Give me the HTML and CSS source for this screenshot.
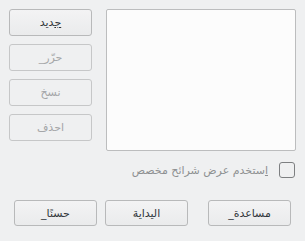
FILE: index.html
```html
<!DOCTYPE html>
<html lang="ar">
<head>
<meta charset="UTF-8" />
<title>عرض الشرائح</title>
<link rel="stylesheet" href="styles.css">
</head>
<body>
  <div class="dialog">
    <div class="top">
      <div class="actions">
        <button class="btn"><u>ج</u>ديد</button>
        <button class="btn" disabled>حرّر_</button>
        <button class="btn" disabled>نسخ</button>
        <button class="btn" disabled>احذف</button>
      </div>
      <div class="list"></div>
    </div>
    <label class="check-row">
      <span class="check-label"><u>ا</u>ستخدم عرض شرائح مخصص</span>
      <span class="box"></span>
    </label>
    <div class="bottom">
      <button class="btn">حسنًا_</button>
      <button class="btn">اليداية</button>
      <button class="btn push">مساعدة_</button>
    </div>
  </div>
</body>
</html>
```

FILE: styles.css
```css
body {
  margin: 0;
  background: #eff0f1;
  font-family: 'DejaVu Sans', 'Noto Sans', sans-serif;
  font-size: 11px;
  color: #31363b;
}
.dialog {
  width: 305px;
  height: 241px;
  box-sizing: border-box;
  padding: 9px 9px 0 9px;
}
.top {
  display: flex;
  gap: 14px;
}
.actions {
  display: flex;
  flex-direction: column;
  gap: 8px;
  width: 83px;
}
.btn {
  direction: rtl;
  height: 27px;
  background: linear-gradient(#f3f3f4, #eaebec);
  border: 1px solid #b8b9ba;
  border-radius: 3px;
  font-family: inherit;
  font-size: 11px;
  color: #31363b;
  padding: 0;
}
.btn:disabled {
  color: #a4a6a8;
  border-color: #c6c7c8;
  background: #eff0f1;
}
.btn u {
  text-decoration-thickness: 1px;
}
.list {
  width: 190px;
  height: 142px;
  box-sizing: border-box;
  background: #fcfcfc;
  border: 1px solid #bcbdbe;
  border-radius: 2px;
}
.check-row {
  display: flex;
  justify-content: flex-end;
  align-items: center;
  gap: 11px;
  margin-top: 11px;
  margin-right: 1px;
  direction: ltr;
}
.check-label {
  direction: rtl;
  color: #8e9092;
  font-size: 11px;
}
.box {
  width: 16px;
  height: 16px;
  box-sizing: border-box;
  border: 1px solid #7d7f81;
  border-radius: 3px;
  background: #eff0f1;
}
.bottom {
  display: flex;
  gap: 8px;
  margin: 22px 5px 0 5px;
}
.bottom .btn {
  width: 83px;
  height: 26px;
}
.bottom .push {
  margin-left: auto;
}
```
